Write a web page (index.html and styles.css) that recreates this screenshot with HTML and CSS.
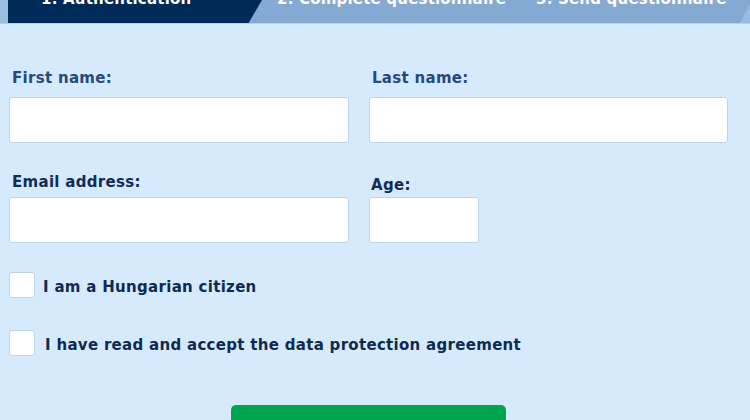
FILE: index.html
```html
<!DOCTYPE html>
<html lang="en">
<head>
<meta charset="utf-8">
<title>Authentication</title>
<link rel="stylesheet" href="styles.css">
</head>
<body>
<nav class="steps">
  <div class="steps-edge"></div>
  <div class="step step-active"><span class="step-text">1. Authentication</span></div>
  <div class="step step-2"><span class="step-text">2. Complete questionnaire</span></div>
  <div class="step step-3"><span class="step-text">3. Send questionnaire</span></div>
  <div class="steps-corner"></div>
</nav>
<form class="auth-form">
  <div class="row row-names">
    <div class="field field-wide">
      <label class="label label-light" for="fn">First name:</label>
      <input class="input" id="fn" type="text">
    </div>
    <div class="field field-fill">
      <label class="label label-light" for="ln">Last name:</label>
      <input class="input" id="ln" type="text">
    </div>
  </div>
  <div class="row row-contact">
    <div class="field field-wide">
      <label class="label" for="em">Email address:</label>
      <input class="input" id="em" type="text">
    </div>
    <div class="field field-age">
      <label class="label label-age" for="ag">Age:</label>
      <input class="input" id="ag" type="text">
    </div>
  </div>
  <label class="check check-first">
    <span class="box"></span>
    <span class="check-text">I am a Hungarian citizen</span>
  </label>
  <label class="check check-second">
    <span class="box"></span>
    <span class="check-text check-text-2">I have read and accept the data protection agreement</span>
  </label>
  <div class="actions">
    <button class="submit" type="button">Next</button>
  </div>
</form>
</body>
</html>
```
FILE: styles.css
```css
html, body {
  margin: 0;
  padding: 0;
}
body {
  background: #d5eafd;
  font-family: "DejaVu Sans", Verdana, sans-serif;
  width: 750px;
  height: 420px;
  overflow: hidden;
}
.steps {
  display: flex;
  height: 24px;
  background: #84a9d2;
  overflow: hidden;
  border-bottom: 1px solid #b5d1ee;
  box-sizing: border-box;
}
.steps-edge {
  width: 8px;
  flex: none;
  background: #9cbde2;
}
.step {
  flex: none;
  height: 24px;
  color: #fff;
  font-weight: bold;
  font-size: 15px;
  line-height: 18px;
  letter-spacing: 0.2px;
  white-space: nowrap;
}
.step-text {
  display: block;
  margin-top: -10px;
}
.step-active {
  width: 254px;
  background: #002a57;
  clip-path: polygon(0 0, 100% 0, calc(100% - 14px) 100%, 0 100%);
  padding-left: 33px;
  box-sizing: border-box;
}
.step-2 {
  padding-left: 15px;
  width: 274px;
  box-sizing: border-box;
}
.step-3 {
  width: 204px;
  box-sizing: border-box;
}
.steps-corner {
  flex: 1;
  background: #97bbe3;
  clip-path: polygon(12px 0, 100% 0, 100% 100%, 0 100%);
}
.auth-form {
  padding: 0 22px 0 9px;
}
.row {
  display: flex;
  gap: 20px;
}
.row-names {
  margin-top: 45px;
}
.row-contact {
  margin-top: 30px;
}
.field {
  display: flex;
  flex-direction: column;
}
.field-wide {
  width: 340px;
}
.field-fill {
  flex: 1;
}
.field-age {
  width: 110px;
}
.label {
  font-size: 15px;
  font-weight: bold;
  line-height: 18px;
  letter-spacing: 0.3px;
  color: #102d57;
  padding-left: 3px;
}
.label-light {
  color: #27497c;
  margin-bottom: 10px;
}
.row-contact .label {
  margin-bottom: 6px;
}
.label-age {
  margin-top: 3px;
  padding-left: 2px;
}
.row-contact .label-age {
  margin-bottom: 3px;
}
.input {
  height: 46px;
  box-sizing: border-box;
  border: 1px solid #bcd3ea;
  border-radius: 3px;
  background: #fff;
  margin: 0;
  padding: 0 10px;
  font: inherit;
}
.check {
  display: flex;
  align-items: center;
  height: 26px;
}
.check-first {
  margin-top: 29px;
}
.check-second {
  margin-top: 32px;
}
.box {
  width: 26px;
  height: 26px;
  box-sizing: border-box;
  border: 1px solid #bcd3ea;
  border-radius: 3px;
  background: #fff;
  flex: none;
}
.check-text {
  margin-left: 8px;
  margin-top: 3px;
  font-size: 15px;
  font-weight: bold;
  letter-spacing: 0.3px;
  color: #0f2a50;
  line-height: 18px;
}
.check-text-2 {
  margin-left: 10px;
}
.actions {
  display: flex;
  justify-content: center;
  margin-top: 49px;
}
.submit {
  width: 275px;
  height: 46px;
  border: none;
  border-radius: 5px;
  background: #00a54f;
  color: #fff;
  font: bold 16px "DejaVu Sans", sans-serif;
}
```
